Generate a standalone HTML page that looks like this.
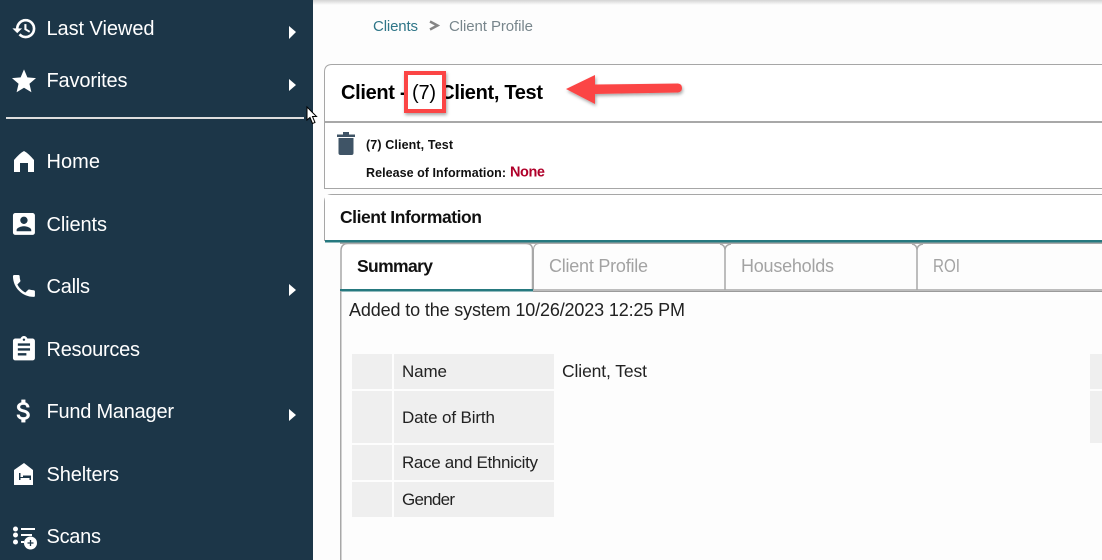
<!DOCTYPE html>
<html><head><meta charset="utf-8"><style>
html,body{margin:0;padding:0;width:1102px;height:560px;overflow:hidden;background:#fdfdfd}
svg{display:block;font-family:"Liberation Sans",sans-serif}
.n text{fill:#fff;font-size:20px}
</style></head><body>
<svg width="1102" height="560" viewBox="0 0 1102 560" xmlns="http://www.w3.org/2000/svg">
<defs>
<linearGradient id="top" x1="0" y1="0" x2="0" y2="1"><stop offset="0" stop-color="#d4d4d4"/><stop offset="1" stop-color="#fdfdfd"/></linearGradient>
<filter id="sh" x="-20%" y="-40%" width="140%" height="200%"><feDropShadow dx="1" dy="2" stdDeviation="1.5" flood-color="#000" flood-opacity=".35"/></filter>
</defs>
<rect width="1102" height="560" fill="#fdfdfd"/>
<rect x="313" y="0" width="789" height="5" fill="url(#top)"/>
<rect x="0" y="0" width="313" height="560" fill="#1c3648"/>

<g class="n">
<text x="46.500" y="35" textLength="108">Last Viewed</text>
<text x="46.500" y="87" textLength="81">Favorites</text>
<text x="46.500" y="168" textLength="53.500">Home</text>
<text x="46.500" y="231" textLength="60.500">Clients</text>
<text x="46.500" y="293" textLength="43.500">Calls</text>
<text x="46.500" y="356" textLength="93.500">Resources</text>
<text x="46.500" y="418" textLength="127.500">Fund Manager</text>
<text x="46.500" y="481" textLength="72.500">Shelters</text>
<text x="46.500" y="543" textLength="54.500">Scans</text>
</g>

<g fill="#fff">
<path transform="translate(12 16) scale(1.05)" stroke="#fff" stroke-width=".5" d="M13 3a9 9 0 0 0-9 9H1l3.89 3.89.07.14L9 12H6c0-3.87 3.13-7 7-7s7 3.13 7 7-3.13 7-7 7c-1.93 0-3.68-.79-4.94-2.06l-1.42 1.42A8.954 8.954 0 0 0 13 21a9 9 0 0 0 0-18zm-1 5v5l4.28 2.54.72-1.21-3.5-2.08V8H12z"/>
<path transform="translate(9.600 67) scale(1.2)" d="M12 17.27L18.18 21l-1.64-7.03L22 9.24l-7.19-.61L12 2 9.19 8.63 2 9.24l5.46 4.73L5.82 21z"/>
<path d="M24 151Q28 153 34 160V172H28V163H20V172H14V160Q20 153 24 151Z"/>
<path transform="translate(9.300 209.300) scale(1.22)" d="M3 5v14a2 2 0 0 0 2 2h14c1.1 0 2-.9 2-2V5c0-1.1-.9-2-2-2H5a2 2 0 0 0-2 2zm12 4c0 1.66-1.34 3-3 3s-3-1.34-3-3 1.34-3 3-3 3 1.34 3 3zm-9 8c0-2 4-3.1 6-3.1s6 1.1 6 3.1v1H6v-1z"/>
<path transform="translate(9.300 271.300) scale(1.22)" d="M6.62 10.79c1.44 2.83 3.76 5.14 6.59 6.59l2.2-2.2c.27-.27.67-.36 1.02-.24 1.12.37 2.33.57 3.57.57.55 0 1 .45 1 1V20c0 .55-.45 1-1 1-9.39 0-17-7.61-17-17 0-.55.45-1 1-1h3.5c.55 0 1 .45 1 1 0 1.25.2 2.45.57 3.57.11.35.03.74-.25 1.02l-2.2 2.2z"/>
<path transform="translate(9.300 334.800) scale(1.22)" d="M19 3h-4.18C14.4 1.84 13.3 1 12 1c-1.3 0-2.4.84-2.82 2H5c-1.1 0-2 .9-2 2v14c0 1.1.9 2 2 2h14c1.1 0 2-.9 2-2V5c0-1.1-.9-2-2-2zm-7 0c.55 0 1 .45 1 1s-.45 1-1 1-1-.45-1-1 .45-1 1-1zm2 14H7v-2h7v2zm3-4H7v-2h10v2zm0-4H7V7h10v2z"/>
<path transform="translate(9 396) scale(1.25)" stroke="#fff" stroke-width=".3" d="M11.8 10.9c-2.27-.59-3-1.2-3-2.15 0-1.09 1.01-1.85 2.7-1.85 1.78 0 2.44.85 2.5 2.1h2.21c-.07-1.72-1.12-3.3-3.21-3.81V3h-3v2.16c-1.94.42-3.5 1.68-3.5 3.61 0 2.31 1.91 3.46 4.7 4.13 2.5.6 3 1.48 3 2.41 0 .69-.49 1.79-2.7 1.79-2.06 0-2.87-.92-2.98-2.1h-2.2c.12 2.19 1.76 3.42 3.68 3.83V21h3v-2.15c1.95-.37 3.5-1.5 3.5-3.55 0-2.84-2.43-3.81-4.7-4.4z"/>
<path fill-rule="evenodd" d="M24 463L33 470V485H14V470ZM19 473V480H20.500V478H29.500V480H31V475.500H23V477H20.500V473Z"/>
<circle cx="15.500" cy="529" r="2.500"/><circle cx="15.500" cy="535" r="2.500"/><circle cx="15.500" cy="542" r="2.500"/>
<rect x="21" y="528" width="14" height="2"/><rect x="21" y="534" width="11" height="2"/><rect x="21" y="541" width="3" height="2"/>
<circle cx="30.500" cy="543" r="6.500"/>
</g>
<path d="M27.500 543h6M30.500 540v6" stroke="#1c3648" stroke-width="1.300"/>

<g fill="#fff">
<path d="M289 26L296 32L289 39Z"/>
<path d="M289 79L296 85L289 91Z"/>
<path d="M289 284L296 290L289 296Z"/>
<path d="M289 409L296 415L289 421Z"/>
</g>
<rect x="6" y="117" width="298" height="2" fill="#dedede"/>

<path d="M307 107V120L310 117.500L312.500 123.500L315 122.500L312.500 116.500H316.500Z" fill="#fff" stroke="#000" stroke-width="1"/>

<!-- breadcrumb -->
<text x="373" y="31" font-size="15" fill="#2f7688" textLength="45">Clients</text>
<path d="M430 21.500L437.500 25.500L430 29.500" fill="none" stroke="#858585" stroke-width="2.500"/>
<text x="449" y="31" font-size="15" fill="#78868c" textLength="84">Client Profile</text>

<!-- card 1 -->
<path d="M1103 64.500H332Q324.500 64.500 324.500 72V188.500H1103Z" fill="#fff" stroke="#a6a6a6"/>
<rect x="325" y="121" width="777" height="2" fill="#a8a8a8"/>
<text x="341" y="99" font-size="20" font-weight="bold" fill="#000" textLength="202">Client - (7) Client, Test</text>
<path d="M337 134.500H355V137H337ZM343 132H349V134.500H343ZM338.500 138H353.500V153Q353.500 155 351.500 155H340.500Q338.500 155 338.500 153Z" fill="#3f5466"/>
<text x="366" y="149" font-size="12.500" font-weight="bold" fill="#111" textLength="87">(7) Client, Test</text>
<text x="366" y="177" font-size="12.500" font-weight="bold" fill="#111" textLength="140">Release of Information:</text>
<text x="510" y="176.500" font-size="14.500" font-weight="bold" fill="#b0002a" textLength="35">None</text>

<!-- annotation -->
<rect x="406" y="73" width="38" height="38" fill="#fff" stroke="#fb4545" stroke-width="4" filter="url(#sh)"/>
<text x="412" y="99" font-size="20" fill="#000" textLength="24">(7)</text>
<path d="M566 89L595 75V84.500L678 83.500Q682 84 682 88Q682 92 678 92.500L595 94V104Z" fill="#fb4545" filter="url(#sh)"/>

<!-- card 2 -->
<path d="M1103 194.500H332Q324.500 194.500 324.500 202V241" fill="#fff" stroke="#a6a6a6"/>
<rect x="325" y="195" width="777" height="45" fill="#fff"/>
<text x="340" y="223" font-size="17.500" font-weight="bold" fill="#111" textLength="142">Client Information</text>
<rect x="325" y="240" width="777" height="2.500" fill="#26797f"/>
<rect x="340" y="242.500" width="762" height="1.500" fill="#a9a9a9"/>

<!-- tabs -->
<rect x="533" y="289" width="569" height="2" fill="#bdbdbd"/>
<rect x="533" y="291" width="569" height="1" fill="#9a9a9a"/>
<path d="M341 291V251Q341 243.500 348 243.500H526Q532.500 243.500 532.500 250V290" fill="#fff" stroke="#a8a8a8" stroke-width="1.500"/>
<rect x="340" y="289" width="193" height="2.500" fill="#26797f"/>
<path d="M533.500 290V250Q533.500 244 539 243.500" fill="none" stroke="#a8a8a8" stroke-width="1"/>
<path d="M720 244Q725 245 725 250Q725 245 731 244M725 249V290" fill="none" stroke="#a8a8a8" stroke-width="1.500"/>
<path d="M912 244Q917 245 917 250Q917 245 923 244M917 249V290" fill="none" stroke="#a8a8a8" stroke-width="1.500"/>
<text x="357" y="272" font-size="17.500" font-weight="bold" fill="#111" textLength="76">Summary</text>
<text x="549" y="272" font-size="18" fill="#a3a3a3" textLength="99">Client Profile</text>
<text x="741" y="272" font-size="18" fill="#a3a3a3" textLength="93">Households</text>
<text x="933" y="272" font-size="18" fill="#a3a3a3" textLength="27" lengthAdjust="spacingAndGlyphs">ROI</text>

<!-- tab content -->
<rect x="340" y="291" width="1.500" height="269" fill="#a8a8a8"/>
<text x="349" y="316" font-size="18" fill="#222" textLength="336">Added to the system 10/26/2023 12:25 PM</text>

<g fill="#efefef">
<rect x="352" y="354" width="40" height="35"/><rect x="394" y="354" width="160" height="35"/>
<rect x="352" y="391" width="40" height="52"/><rect x="394" y="391" width="160" height="52"/>
<rect x="352" y="445" width="40" height="35"/><rect x="394" y="445" width="160" height="35"/>
<rect x="352" y="482" width="40" height="35"/><rect x="394" y="482" width="160" height="35"/>
<rect x="1090" y="354" width="12" height="35"/><rect x="1090" y="391" width="12" height="52"/>
</g>
<g fill="#222" font-size="17">
<text x="402" y="377" textLength="45">Name</text>
<text x="402" y="423" textLength="93">Date of Birth</text>
<text x="402" y="468" textLength="136">Race and Ethnicity</text>
<text x="402" y="505" textLength="53">Gender</text>
</g>
<text x="562" y="377" font-size="17.500" fill="#222" textLength="85">Client, Test</text>
</svg>
</body></html>
